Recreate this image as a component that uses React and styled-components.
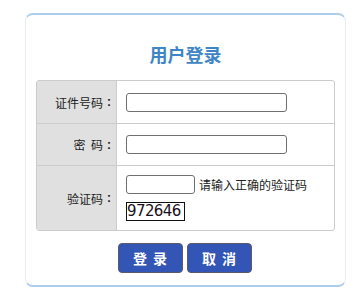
import React from "react";
import styled, { createGlobalStyle } from "styled-components";

const Global = createGlobalStyle`
  html, body { margin: 0; padding: 0; background: #fff; }
  body { font-family: "Liberation Sans", "Noto Sans CJK SC", sans-serif; }
`;

const Page = styled.div`
  padding: 13px 16px 0 25px;
`;

const Card = styled.div`
  width: 319px;
  border-top: 2px solid #aecdee;
  border-bottom: 2px solid #aecdee;
  border-left: 1px solid #e6edf5;
  border-right: 1px solid #e6edf5;
  border-radius: 8px;
  padding: 0 0 12px;
  box-sizing: content-box;
`;

const Title = styled.h2`
  margin: 0;
  padding: 27px 0 0;
  height: 38px;
  box-sizing: border-box;
  text-align: center;
  font-family: "Noto Sans CJK SC", sans-serif;
  font-size: 18px;
  font-weight: 700;
  line-height: 24px;
  color: #3d85c6;
`;

const Form = styled.div`
  margin: 27px auto 0;
  width: 299px;
  box-sizing: border-box;
  border: 1px solid #cccccc;
  border-radius: 3px;
  display: grid;
  grid-template-columns: 80px 1fr;
  overflow: hidden;
`;

const Label = styled.div`
  background: #e0e0e0;
  border-right: 1px solid #cccccc;
  border-top: ${(p) => (p.$first ? "none" : "1px solid #cccccc")};
  height: ${(p) => p.$h}px;
  box-sizing: border-box;
  display: flex;
  align-items: center;
  justify-content: flex-end;
  padding-right: 1px;
  font-family: "Noto Sans CJK SC", sans-serif;
  font-size: 12px;
  color: #222;
  white-space: pre;
`;

const Colon = styled.span`
  display: inline-block;
  width: 12px;
  text-align: center;
  font-family: "Liberation Sans", sans-serif;
  font-weight: 700;
`;

const Cell = styled.div`
  border-top: ${(p) => (p.$first ? "none" : "1px solid #cccccc")};
  height: ${(p) => p.$h}px;
  box-sizing: border-box;
  display: flex;
  flex-direction: column;
  justify-content: center;
  padding-left: 9px;
  gap: 8px;
`;

const Input = styled.input`
  width: ${(p) => p.$w}px;
  height: 19px;
  box-sizing: border-box;
  border: 1px solid #707070;
  border-radius: 3px;
  padding: 0;
  margin: 0;
  background: #fff;
  outline: none;
`;

const Line = styled.div`
  display: flex;
  align-items: center;
  gap: 4px;
`;

const Hint = styled.span`
  font-family: "Noto Sans CJK SC", sans-serif;
  font-size: 12px;
  color: #222;
`;

const Captcha = styled.span`
  align-self: flex-start;
  display: inline-block;
  width: 59px;
  height: 19px;
  box-sizing: border-box;
  border: 1px solid #111;
  font-family: "DejaVu Sans", sans-serif;
  font-size: 15px;
  line-height: 17px;
  letter-spacing: -0.6px;
  color: #1a1020;
  overflow: hidden;
  white-space: nowrap;
  background: #fff;
`;

const Buttons = styled.div`
  display: flex;
  justify-content: center;
  gap: 4px;
  margin-top: 12px;
  padding-right: 2px;
`;

const Button = styled.button`
  width: 65px;
  height: 30px;
  box-sizing: border-box;
  border: 1px solid #5a5a6a;
  border-radius: 4px;
  background: #3355b5;
  color: #fff;
  font-family: "Noto Sans CJK SC", sans-serif;
  font-size: 14px;
  font-weight: 700;
  letter-spacing: 6px;
  padding: 0 0 0 6px;
  cursor: pointer;
`;

export default function App() {
  return (
    <>
      <Global />
      <Page>
        <Card>
          <Title>用户登录</Title>
          <Form>
            <Label $first $h={42}>证件号码<Colon>:</Colon></Label>
            <Cell $first $h={42}>
              <Input $w={161} />
            </Cell>
            <Label $h={42}>密  码<Colon>:</Colon></Label>
            <Cell $h={42}>
              <Input $w={161} type="password" />
            </Cell>
            <Label $h={65}>验证码<Colon>:</Colon></Label>
            <Cell $h={65}>
              <Line>
                <Input $w={69} />
                <Hint>请输入正确的验证码</Hint>
              </Line>
              <Captcha>972646</Captcha>
            </Cell>
          </Form>
          <Buttons>
            <Button>登录</Button>
            <Button>取消</Button>
          </Buttons>
        </Card>
      </Page>
    </>
  );
}
